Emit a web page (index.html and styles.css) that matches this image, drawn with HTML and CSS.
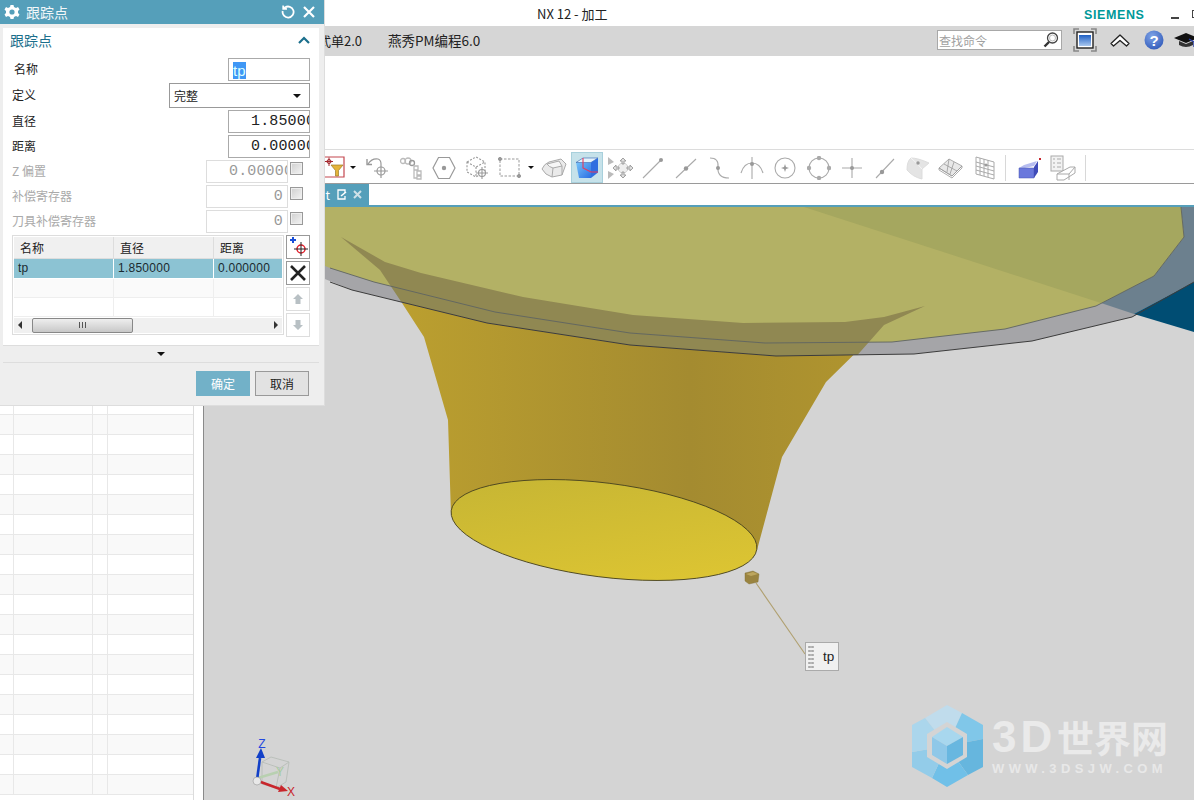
FILE: index.html
```html
<!DOCTYPE html>
<html lang="zh">
<head>
<meta charset="utf-8">
<title>NX 12 - 加工</title>
<link rel="stylesheet" href="styles.css">
</head>
<body>
<div class="app">
  <header class="titlebar">
    <div class="app-title">NX 12 - 加工</div>
    <div class="brand">SIEMENS</div>
    <div class="win-min"></div>
    <div class="win-max"></div>
  </header>

  <div class="menubar">
    <div class="menu-item first">式单2.0</div>
    <div class="menu-item second">燕秀PM编程6.0</div>
    <div class="menu-right">
      <div class="search">
        <span>查找命令</span>
        <svg width="18" height="18" viewBox="0 0 18 18"><circle cx="10.5" cy="7" r="5" fill="#fff" stroke="#444" stroke-width="1.3"/><circle cx="10.5" cy="7" r="3" fill="none" stroke="#bbb"/><path d="M7 11L2.5 15.5" stroke="#333" stroke-width="2.4"/></svg>
      </div>
      <svg class="mi" width="24" height="24" viewBox="0 0 24 24"><path d="M1 6V1h5M18 1h5v5M23 18v5h-5M6 23H1v-5" fill="none" stroke="#888" stroke-width="1.6"/><rect x="4" y="4" width="16" height="16" fill="#fff" stroke="#222" stroke-width="1.4"/><defs><linearGradient id="fs" x1="0" y1="0" x2="0" y2="1"><stop offset="0" stop-color="#1f5fc4"/><stop offset="1" stop-color="#a9c8ef"/></linearGradient></defs><rect x="6" y="7" width="12" height="11" fill="url(#fs)"/></svg>
      <svg class="mi chev" width="22" height="16" viewBox="0 0 22 16"><path d="M2 11.500L11 3L20 11.500L17.500 14L11 8.500L4.500 14Z" fill="#fff" stroke="#222" stroke-width="1.300" stroke-linejoin="round"/></svg>
      <svg class="mi help" width="20" height="20" viewBox="0 0 20 20"><defs><radialGradient id="hp" cx=".4" cy=".3" r=".8"><stop offset="0" stop-color="#7fa3e6"/><stop offset="1" stop-color="#2d57b8"/></radialGradient></defs><circle cx="10" cy="10" r="9.500" fill="url(#hp)"/><text x="10" y="15.500" class="help-q">?</text></svg>
      <svg class="mi cap" width="24" height="20" viewBox="0 0 24 20"><path d="M0 8L12 3L24 8L12 13Z" fill="#111"/><path d="M5 11V15Q12 19 19 15V11L12 14Z" fill="#333"/><path d="M15 9L20 12V17" fill="none" stroke="#2a3fa8" stroke-width="1.400"/></svg>
    </div>
  </div>

  <div class="ribbon"></div>

  <div class="toolbar">
    <svg class="filter" width="20" height="23" viewBox="0 0 20 23"><path d="M0 1H19V21H0" fill="#fff" stroke="#c4474f" stroke-width="1.200"/><path d="M4 1.500V10M0 5.500H8" stroke="#a3262c" stroke-width="1"/><circle cx="4" cy="5.500" r="2" fill="none" stroke="#a3262c"/><path d="M6 9H18L13.500 14.500V20H10.500V14.500Z" fill="#e4b43a" stroke="#9b7a26" stroke-width=".7"/></svg>
    <div class="dd"><i></i></div>

    <div class="tool"><svg width="24" height="24" viewBox="0 0 24 24" fill="none" stroke="#999" stroke-width="1.200"><path d="M2 8Q6 2 12 3Q15 4 15 8"/><path d="M1 3V8.500H6" stroke-width="1.400"/><circle cx="15" cy="15" r="4"/><path d="M15 8V22M8 15H22"/></svg></div>
    <div class="tool"><svg width="24" height="24" viewBox="0 0 24 24" fill="none" stroke="#bbb" stroke-width="1.300"><circle cx="4" cy="5" r="2.500"/><circle cx="9" cy="5" r="3"/><circle cx="13" cy="7" r="2.500" stroke="#999"/><path d="M15 10H19V14H15ZM18 15H22V19H18ZM18 20H22V23H18ZM15 14V22H18"/></svg></div>
    <div class="tool"><svg width="24" height="24" viewBox="0 0 24 24" fill="none" stroke="#999" stroke-width="1.200"><path d="M6.500 1.500H17.500L23 12L17.500 22.500H6.500L1 12Z"/><circle cx="12" cy="12" r="1.600" fill="#999"/></svg></div>
    <div class="tool"><svg width="24" height="24" viewBox="0 0 24 24" fill="none" stroke="#999" stroke-width="1.100"><path d="M2 6L11 1L20 6V16L11 21L2 16ZM2 6L11 11L20 6M11 11V21" stroke-dasharray="2 1.500"/><circle cx="17" cy="17" r="3.500" fill="#fff"/><path d="M17 11V23M11 17H23"/></svg></div>
    <div class="tool rect-tool"><svg width="24" height="24" viewBox="0 0 24 24" fill="none" stroke="#999"><rect x="3" y="3" width="19" height="17" stroke-dasharray="2.500 1.500"/><circle cx="3" cy="3" r="1.600" fill="#999"/><circle cx="22" cy="20" r="1.600" fill="#999"/></svg></div>
    <div class="dd narrow"><i></i></div>
    <div class="tool"><svg width="26" height="24" viewBox="0 0 26 24" stroke-linejoin="round"><path d="M1 13Q3 8 8 6L20 3L25 8L21 19L11 21Q4 19 1 13Z" fill="#eaeaea" stroke="#aaa"/><path d="M6 8L18 5L21 10L12 12Q8 11 6 8ZM12 12L11 21M21 10L21 19" fill="#f6f6f6" stroke="#aaa"/></svg></div>
    <div class="tool active"><svg width="24" height="24" viewBox="0 0 24 24"><defs><linearGradient id="bx" x1="0" y1="0" x2="1" y2="1"><stop offset="0" stop-color="#78c4fa"/><stop offset="1" stop-color="#2b6fe2"/></linearGradient></defs><path d="M1 6.500H16V22H4Z" fill="url(#bx)"/><path d="M1 6.500L8 2H23L16 6.500Z" fill="#e4f2fb" stroke="#2c5fae" stroke-width=".6"/><path d="M16 6.500V22L23 16.500V2Z" fill="#2f6ee0"/><path d="M8 2V12L16 16H23" fill="none" stroke="#e8385b" stroke-width="1.100"/></svg></div>
    <div class="tool"><svg width="26" height="24" viewBox="0 0 26 24" fill="#ddd" stroke="#999" stroke-width=".9"><path d="M1 1L7 6L1 9Z" fill="#bbb" stroke="none"/><path d="M1 15L7 18L1 23Z" fill="#bbb" stroke="none"/><circle cx="16" cy="12" r="5" fill="#eee" stroke="#ccc"/><path d="M16 2L19 5H17V8H15V5H13ZM16 22L19 19H17V16H15V19H13ZM6 12L9 9V11H12V13H9V15ZM26 12L23 9V11H20V13H23V15Z"/></svg></div>
    <div class="tool"><svg width="24" height="24" viewBox="0 0 24 24" fill="none" stroke="#aaa" stroke-width="1.100"><path d="M2 22L20 4"/><circle cx="20" cy="4" r="2" fill="#999" stroke="none"/></svg></div>
    <div class="tool"><svg width="24" height="24" viewBox="0 0 24 24" fill="none" stroke="#aaa" stroke-width="1.100"><path d="M2 22L22 3"/><circle cx="12" cy="12.500" r="2.200" fill="#999" stroke="none"/></svg></div>
    <div class="tool"><svg width="24" height="24" viewBox="0 0 24 24" fill="none" stroke="#aaa" stroke-width="1.100"><path d="M3 2Q12 2 11 11Q10 22 22 22"/><circle cx="11" cy="12" r="2" fill="#999" stroke="none"/></svg></div>
    <div class="tool"><svg width="24" height="24" viewBox="0 0 24 24" fill="none" stroke="#aaa" stroke-width="1.100"><path d="M1 17Q4 7 12 7Q20 7 23 17M12 1V23"/><circle cx="12" cy="8" r="2" fill="#999" stroke="none"/></svg></div>
    <div class="tool"><svg width="24" height="24" viewBox="0 0 24 24" fill="none" stroke="#aaa" stroke-width="1.100"><circle cx="12" cy="12" r="10"/><path d="M12 8L13 11L16 12L13 13L12 16L11 13L8 12L11 11Z" fill="#999" stroke="none"/></svg></div>
    <div class="tool"><svg width="24" height="24" viewBox="0 0 24 24" fill="none" stroke="#aaa" stroke-width="1.100"><circle cx="12" cy="12" r="10"/><g fill="#aaa" stroke="none"><circle cx="12" cy="2" r="2.200"/><circle cx="12" cy="22" r="2.200"/><circle cx="2" cy="12" r="2.200"/><circle cx="22" cy="12" r="2.200"/></g></svg></div>
    <div class="tool"><svg width="24" height="24" viewBox="0 0 24 24" fill="none" stroke="#aaa" stroke-width="1.100"><path d="M12 2V22M2 12H22"/><circle cx="12" cy="12" r="2" fill="#999" stroke="none"/></svg></div>
    <div class="tool"><svg width="24" height="24" viewBox="0 0 24 24" fill="none" stroke="#aaa" stroke-width="1.100"><path d="M3 22L21 3"/><circle cx="9" cy="16" r="2.200" fill="#999" stroke="none"/></svg></div>
    <div class="tool"><svg width="26" height="24" viewBox="0 0 26 24"><path d="M6 2Q13 2 24 7L17 13L17 23Q8 21 2 14Q2 5 6 2Z" fill="#e4e4e4" stroke="#ddd"/><path d="M17 13Q13 8 6 2" fill="none" stroke="#f5f5f5"/><circle cx="13" cy="7" r="1.700" fill="#999"/></svg></div>
    <div class="tool"><svg width="26" height="24" viewBox="0 0 26 24" stroke="#999" stroke-width=".8"><path d="M1 12L11 3L24 10L14 20Z" fill="#e8e8e8"/><path d="M1 12L14 20L24 10M1 12L1 14L14 22L24 12V10" fill="none"/><path d="M6 8L19 15M11 3L9 16M16 6L12 18" fill="none"/></svg></div>
    <div class="tool"><svg width="24" height="24" viewBox="0 0 24 24" fill="none" stroke="#aaa" stroke-width="1"><path d="M3 1L21 6L21 23L3 18ZM3 6L21 11M3 10L21 15M3 14L21 19M7 2V19M11 3V20M15 4V21"/><circle cx="13" cy="9" r="1.600" fill="#999" stroke="none"/></svg></div>
    <div class="sep"></div>
    <div class="tool"><svg width="26" height="24" viewBox="0 0 26 24"><path d="M2 12L7 9L20 5L17 10L3 13Z" fill="#b6bdf0"/><path d="M2 12H17V22H2Z" fill="#6a78dc" stroke="#4957b0" stroke-width=".5"/><path d="M17 11L21 5V16L17 22Z" fill="#3f4bb8"/><rect x="22" y="2" width="2" height="2" fill="#c6262e"/></svg></div>
    <div class="tool"><svg width="26" height="26" viewBox="0 0 26 26" fill="none" stroke="#aaa"><rect x="1" y="1" width="12" height="15" fill="#f2f2f2"/><path d="M3 4H5M7 4H11M3 8H5M7 8H11M3 12H5M7 12H11"/><path d="M7 25V19L20 12H25V18L14 25ZM7 19H19V25M19 19L25 12" fill="#fff"/></svg></div>
    <div class="sep last"></div>
  </div>

  <div class="tabs">
    <div class="tab">
      <span class="tab-name">t</span>
      <svg width="10" height="11" viewBox="0 0 10 11" fill="none" stroke="#fff" stroke-width="1.300"><path d="M8 4V1H1V10H8V7"/><path d="M4 7L9 3" stroke-width="1.600"/></svg>
      <svg class="tab-x" width="9" height="9" viewBox="0 0 9 9" stroke="#cfe1e8" stroke-width="2"><path d="M1 1L8 8M8 1L1 8"/></svg>
    </div>
  </div>

  <main class="work">
    <nav class="nav">
      <div class="nav-grid">
        <div class="nr"><b></b><b></b><b></b><b></b></div><div class="nr alt"><b></b><b></b><b></b><b></b></div>
        <div class="nr"><b></b><b></b><b></b><b></b></div><div class="nr alt"><b></b><b></b><b></b><b></b></div>
        <div class="nr"><b></b><b></b><b></b><b></b></div><div class="nr alt"><b></b><b></b><b></b><b></b></div>
        <div class="nr"><b></b><b></b><b></b><b></b></div><div class="nr alt"><b></b><b></b><b></b><b></b></div>
        <div class="nr"><b></b><b></b><b></b><b></b></div><div class="nr alt"><b></b><b></b><b></b><b></b></div>
        <div class="nr"><b></b><b></b><b></b><b></b></div><div class="nr alt"><b></b><b></b><b></b><b></b></div>
        <div class="nr"><b></b><b></b><b></b><b></b></div><div class="nr alt"><b></b><b></b><b></b><b></b></div>
        <div class="nr"><b></b><b></b><b></b><b></b></div><div class="nr alt"><b></b><b></b><b></b><b></b></div>
        <div class="nr"><b></b><b></b><b></b><b></b></div><div class="nr alt"><b></b><b></b><b></b><b></b></div>
        <div class="nr"><b></b><b></b><b></b><b></b></div><div class="nr alt"><b></b><b></b><b></b><b></b></div>
        <div class="nr"><b></b><b></b><b></b><b></b></div><div class="nr alt"><b></b><b></b><b></b><b></b></div>
        <div class="nr"><b></b><b></b><b></b><b></b></div><div class="nr alt"><b></b><b></b><b></b><b></b></div>
        <div class="nr"><b></b><b></b><b></b><b></b></div><div class="nr alt"><b></b><b></b><b></b><b></b></div>
        <div class="nr"><b></b><b></b><b></b><b></b></div><div class="nr alt"><b></b><b></b><b></b><b></b></div>
      </div>
    </nav>

    <section class="viewport">
      <svg class="scene" width="990" height="593" viewBox="204 207 990 593">
        <defs>
          <linearGradient id="amber" x1="0" y1="0" x2="1" y2="0">
            <stop offset="0" stop-color="#bb9f2f"/><stop offset=".55" stop-color="#a48b30"/><stop offset="1" stop-color="#b4982e"/>
          </linearGradient>
          <linearGradient id="cap" x1="0" y1="0" x2="1" y2="1">
            <stop offset="0" stop-color="#c4b434"/><stop offset="1" stop-color="#e0c732"/>
          </linearGradient>
          <clipPath id="upper">
            <path d="M204 207H1194V282L1132 317L1032 341L914 354L776 356L630 345L487 323L352 290L204 230Z"/>
          </clipPath>
        </defs>
        <rect x="204" y="207" width="990" height="593" fill="#d4d4d4"/>
        <path d="M402 303L424 337L448 420L451 515L757 550L782 457L826 382L884 325L925 306Z" fill="url(#amber)"/>
        <path d="M204 207H1194V282L1132 317L1032 341L914 354L776 356L630 345L487 323L352 290L204 230Z" fill="#a5a5a8"/>
        <path d="M1101 303L1134 314L1194 282V207H1181L1184 237L1154 276Z" fill="#6c808e"/>
        <path d="M1134 314L1194 282V332Z" fill="#004d73"/>
        <path d="M204 207H1181L1184 237L1154 276L1096 306L1005 329L892 342L765 343L630 333L495 312L374 282L330 268L204 215Z" fill="#b3b165"/>
        <path d="M804 207H1181L1184 237L1154 276L1101 303Z" fill="#a5a75f"/>
        <path d="M341 237L380 270L402 303L424 337L500 500L800 420L884 325L925 306L884 317L845 322L743 323L633 315L523 297L421 273L385 262Z" fill="#908852" clip-path="url(#upper)"/>
        <path d="M330 268L374 282L495 312L630 333L765 343L892 342L1005 329L1096 306L1154 276L1184 237L1181 207" fill="none" stroke="#5f6462" stroke-width=".9"/>
        <path d="M330 282L352 290L487 323L630 345L776 356L914 354L1032 341L1132 317L1194 282" fill="none" stroke="#3c3c3c" stroke-width="1"/>
        <ellipse cx="604" cy="530" rx="154" ry="47" transform="rotate(7.200 604 530)" fill="url(#cap)" stroke="#4a4520" stroke-width=".9"/>
        <path d="M745 573L753 571L759 574L758 582L749 584L745 581Z" fill="#9a8440" stroke="#7e6c30" stroke-width=".4"/>
        <path d="M746 574L753 572L758 574L751 576Z" fill="#bda65e"/>
        <path d="M756 583L805 654" stroke="#b0a070" stroke-width="1.100"/>

        <g class="triad">
          <path d="M262 762L271 757L289 762L286 782L276 788L262 784ZM262 762L280 768L289 762M280 768L276 788" fill="none" stroke="#b8bdb8" stroke-width=".9"/>
          <path d="M258 778L278 772" stroke="#b8d0b0" stroke-width="2.500"/>
          <path d="M257 780L260 758" stroke="#1240c8" stroke-width="2.600"/>
          <path d="M261 748L265 758H256Z" fill="#1240c8"/>
          <path d="M258 781L280 789" stroke="#c8262c" stroke-width="2.600"/>
          <path d="M288 791L278 792L281 785Z" fill="#c8262c"/>
          <circle cx="257" cy="781" r="4" fill="#e8e8e8" stroke="#999" stroke-width=".6"/>
          <text x="262" y="748" class="tz">Z</text>
          <text x="291" y="796" class="tx">X</text>
          <text x="280" y="776" class="ty">Y</text>
        </g>

        <g class="logo">
          <polygon points="947,746 925,718 947,705 962,713" fill="#c0dcec"/>
          <polygon points="947,746 962,713 983,725 983,739" fill="#80c7e9"/>
          <polygon points="947,746 983,739 983,767 968,775" fill="#66b6de"/>
          <polygon points="947,746 968,775 947,787 932,778" fill="#70c0e8"/>
          <polygon points="947,746 932,778 912,767 912,752" fill="#93cce9"/>
          <polygon points="947,746 912,752 912,725 925,718" fill="#abd6ec"/>
          <polygon points="947,722 967,734 967,757 947,769 927,757 927,734" fill="#d4d4d4"/>
          <polygon points="947,727 963,737 947,746 932,737" fill="#a8d7ee"/>
          <polygon points="932,737 947,746 947,764 932,755" fill="#8fc8e8"/>
          <polygon points="963,737 947,746 947,764 963,755" fill="#68b7e0"/>
        </g>
      </svg>

      <div class="note"><span class="grip"></span><span class="note-text">tp</span></div>
      <div class="wm-big"><span class="wm-3d">3D</span><span class="wm-cn">世界网</span></div>
      <div class="wm-small">WWW.3DSJW.COM</div>
    </section>
  </main>
</div>

<aside class="dialog">
  <div class="dlg-title">
    <svg width="16" height="16" viewBox="0 0 16 16"><path d="M6.500 1H9.500L10 3L12 4L14 3L15.500 5.500L14 7V9L15.500 10.500L14 13L12 12L10 13L9.500 15H6.500L6 13L4 12L2 13L.5 10.500L2 9V7L.5 5.500L2 3L4 4L6 3Z" fill="#fff"/><circle cx="8" cy="8" r="2.600" fill="#559fba"/></svg>
    <span class="dlg-name">跟踪点</span>
    <svg class="dlg-reset" width="14" height="14" viewBox="0 0 14 14" fill="none" stroke="#fff" stroke-width="1.800"><path d="M4 2.500A5.500 5.500 0 1 1 1.700 6"/><path d="M2 0.500V4H6" stroke-width="1.300" fill="#fff"/></svg>
    <svg class="dlg-close" width="12" height="12" viewBox="0 0 12 12" stroke="#fff" stroke-width="2.200"><path d="M1 1L11 11M11 1L1 11"/></svg>
  </div>

  <div class="panel">
    <div class="sec-head">
      <span>跟踪点</span>
      <svg width="12" height="8" viewBox="0 0 12 8" fill="none" stroke="#1b6f8c" stroke-width="2.200"><path d="M1 7L6 2L11 7"/></svg>
    </div>

    <div class="row"><label class="lbl name-lbl">名称</label><div class="field"><span class="sel">tp</span></div></div>
    <div class="row tall"><label class="lbl">定义</label><div class="select"><span>完整</span><i></i></div></div>
    <div class="row"><label class="lbl">直径</label><div class="field num">1.850000</div></div>
    <div class="row"><label class="lbl">距离</label><div class="field num">0.000000</div></div>
    <div class="row off"><label class="lbl">Z 偏置</label><div class="field num">0.000000</div><span class="check"></span></div>
    <div class="row off"><label class="lbl">补偿寄存器</label><div class="field num end">0</div><span class="check"></span></div>
    <div class="row off"><label class="lbl">刀具补偿寄存器</label><div class="field num end">0</div><span class="check"></span></div>

    <div class="list-wrap">
      <div class="list">
        <div class="lr head"><div>名称</div><div>直径</div><div>距离</div></div>
        <div class="lr on"><div>tp</div><div>1.850000</div><div>0.000000</div></div>
        <div class="lr alt"><div></div><div></div><div></div></div>
        <div class="lr"><div></div><div></div><div></div></div>
        <div class="hscroll">
          <i class="arr l"></i>
          <div class="thumb"><span></span></div>
          <i class="arr r"></i>
        </div>
      </div>
      <div class="side">
        <div class="sbtn"><svg width="20" height="20" viewBox="0 0 20 20"><path d="M5 0V6M2 3H8" stroke="#1a4fd8" stroke-width="2"/><circle cx="13" cy="12" r="4" fill="none" stroke="#e0202c" stroke-width="1.500"/><path d="M13 5V19M6 12H20" stroke="#222"/></svg></div>
        <div class="sbtn"><svg width="18" height="18" viewBox="0 0 18 18" stroke="#222" stroke-width="2.600"><path d="M2 2L16 16M16 2L2 16"/></svg></div>
        <div class="sbtn"><svg width="12" height="12" viewBox="0 0 12 12"><path d="M6 1L11 6H8.500V11H3.500V6H1Z" fill="#b8c0c4"/></svg></div>
        <div class="sbtn"><svg width="12" height="12" viewBox="0 0 12 12"><path d="M6 11L11 6H8.500V1H3.500V6H1Z" fill="#b8c0c4"/></svg></div>
      </div>
    </div>
  </div>

  <div class="more"><i></i></div>
  <div class="foot">
    <button class="btn primary">确定</button>
    <button class="btn">取消</button>
  </div>
</aside>
</body>
</html>
```
FILE: styles.css
```css
* { box-sizing: border-box; }
html, body { margin: 0; height: 100%; overflow: hidden; }
body {
  position: relative;
  background: #fff;
  color: #222;
  font-family: "Noto Sans CJK SC", "Noto Sans", sans-serif;
  font-size: 12px;
}
.app { display: flex; flex-direction: column; width: 1194px; height: 800px; }

/* title bar */
.titlebar { display: flex; align-items: center; height: 26px; background: #fff; flex: none; }
.app-title { margin-left: 537px; width: 73px; flex: none; font-size: 13px; color: #222; white-space: nowrap; }
.brand {
  margin: 3px 0 0 474px;
  font: bold 12.500px "Liberation Sans", sans-serif;
  letter-spacing: .6px;
  color: #009999;
  width: 62px;
  flex: none;
  white-space: nowrap;
}
.win-min { width: 8px; height: 2px; background: #444; margin: 10px 0 0 25px; flex: none; }
.win-max { width: 8px; height: 8px; border: 1px solid #444; margin: 2px 0 0 13px; flex: none; }

/* menu bar */
.menubar { display: flex; align-items: center; height: 30px; background: #d6d6d6; flex: none; font-size: 13px; padding-bottom: 2px; }
.menu-item { color: #222; white-space: nowrap; flex: none; }
.menu-item.first { margin-left: 318px; width: 70px; }
.menu-item.second { width: 110px; font-size: 13.500px; }
.menu-right { display: flex; align-items: center; margin-left: 439px; flex: none; }
.search {
  display: flex; align-items: center; justify-content: space-between;
  width: 125px; height: 20px; background: #fff; border: 1px solid #a8a8a8;
  padding: 0 1px; font-size: 12px; color: #a0a0a0; flex: none;
}
.mi { flex: none; display: block; }
.search + .mi { margin-left: 11px; }
.chev { margin-left: 12px; }
.help { margin-left: 13px; }
.cap { margin-left: 10px; }
.help-q { font: bold 15px "Liberation Sans", sans-serif; fill: #fff; text-anchor: middle; }

/* ribbon and toolbar */
.ribbon { height: 93px; background: #fff; flex: none; }
.toolbar {
  display: flex; align-items: center; height: 35px; flex: none;
  background: #fff; border-top: 1px solid #dcdcdc; border-bottom: 1px solid #9a9a9a;
  padding: 2px 0 0 325px;
}
.filter { flex: none; display: block; }
.dd { width: 16px; display: flex; justify-content: center; flex: none; }
.dd.narrow { width: 14px; }
.dd i, .select i, .more i {
  display: block; width: 0; height: 0;
  border-left: 4px solid transparent; border-right: 4px solid transparent; border-top: 4px solid #111;
}
.dd i { border-left-width: 3px; border-right-width: 3px; border-top-width: 3px; }
.tool { width: 33.200px; height: 31px; display: flex; align-items: center; justify-content: center; flex: none; }
.tool svg { display: block; flex: none; }
.rect-tool { width: 30px; }
.active { width: 32px; background: #c6e2ea; border: 1px solid #a8d0dc; }
.sep { width: 1px; height: 26px; background: #d8d8d8; margin: 0 7.400px 0 3.400px; flex: none; }
.sep.last { margin-left: 5.400px; }

/* tabs */
.tabs { height: 23px; background: #fff; border-bottom: 2px solid #559fba; flex: none; }
.tab {
  display: flex; align-items: center; justify-content: flex-end;
  width: 369px; height: 21px; background: #559fba; color: #fff;
  padding-right: 7px; font-size: 12px;
}
.tab-name { margin-right: 7px; }
.tab-x { margin-left: 6px; }

/* work area */
.work { display: flex; flex: 1; min-height: 0; }
.nav { width: 204px; background: #fff; border-right: 1px solid #8a8a8a; flex: none; overflow: hidden; }
.nav-grid { width: 194px; height: 100%; padding-top: 28px; border-right: 1px solid #dcdcdc; }
.nr {
  display: grid; grid-template-columns: 14px 79px 15px 85px;
  height: 20px; border-bottom: 1px solid #e8e8e8;
}
.nr.alt { background: #f9f9f9; }
.nr b { display: block; border-right: 1px solid #e8e8e8; }
.nr b:last-child { border-right: 0; }

.viewport { position: relative; flex: 1; background: #d4d4d4; overflow: hidden; }
.scene { display: block; }
.tz, .tx, .ty { font: 12px "Liberation Sans", sans-serif; text-anchor: middle; }
.tz { fill: #2348e0; }
.tx { fill: #c8262c; }
.ty { fill: #a8cca0; }

.note {
  position: absolute; left: 601px; top: 435px;
  display: flex; align-items: center;
  width: 34px; height: 29px; background: #f0f0f0; border: 1px solid #aaa;
}
.grip {
  width: 6px; height: 24px; margin-left: 2px;
  background: radial-gradient(circle, #aaa 1.100px, transparent 1.200px) 0 0 / 3px 4px;
}
.note-text { margin-left: 9px; font: 13.500px "Liberation Sans", sans-serif; color: #222; }

.wm-big { position: absolute; left: 788px; top: 511px; height: 38px; color: #eaeaea; font-weight: 700; white-space: nowrap; display: flex; align-items: center; }
.wm-3d { font: bold 44px/38px "Liberation Sans", sans-serif; letter-spacing: 4px; width: 65px; }
.wm-cn { font-size: 37px; line-height: 38px; }
.wm-small {
  position: absolute; left: 788px; top: 554px;
  font: bold 13px/15px "Liberation Sans", sans-serif; letter-spacing: 4.400px; color: #e8e8e8; white-space: nowrap;
}

/* dialog */
.dialog {
  position: absolute; left: 0; top: 0; width: 325px; height: 406px;
  background: #eee; border-right: 1px solid #ddd; border-bottom: 1px solid #ddd;
  display: flex; flex-direction: column;
}
.dlg-title { display: flex; align-items: center; height: 24px; background: #559fba; padding: 0 9px 0 4px; flex: none; color: #fff; }
.dlg-name { font-size: 14px; margin-left: 6px; flex: 1; color: #f2f7f9; }
.dlg-reset { margin-right: 8px; }
.panel { margin: 4px 5px 0 3px; height: 318px; background: #fff; border-bottom: 1px solid #ddd; flex: none; padding: 0 9px; }
.sec-head { display: flex; align-items: center; justify-content: space-between; height: 30px; font-size: 14px; color: #1b6f8c; padding-bottom: 7px; margin-left: -2px; }
.row { display: flex; align-items: center; justify-content: flex-end; height: 23px; margin-bottom: 2px; }
.row.tall { height: 25px; }
.lbl { margin: -2px auto 0 0; font-size: 12px; color: #222; }
.name-lbl { margin-left: 2px; }
.field {
  width: 82px; height: 23px; background: #fff; border: 1px solid #aaa;
  padding: 2px 0 0 4px; overflow: hidden; white-space: nowrap; flex: none; font-size: 13px;
}
.sel { display: inline-block; background: #3f97f5; color: #dff; font: 15px/17px "Liberation Sans", sans-serif; }
.num { font: 15px/18px "Liberation Mono", monospace; letter-spacing: .15px; padding-left: 22px; }
.num.end { text-align: right; padding-right: 4px; }
.select { display: flex; align-items: center; justify-content: space-between; width: 141px; height: 25px; border: 1px solid #999; background: #fff; padding: 0 8px 0 4px; font-size: 12px; }
.off .lbl { color: #aaa; }
.off .field { border-color: #ddd; color: #999; }
.check { width: 13px; height: 13px; border: 1px solid #999; background: linear-gradient(135deg, #cfcfcf, #f4f4f4); margin: -6px 7px 0 2px; flex: none; box-shadow: inset 0 0 0 1px #eee; }

.list-wrap { display: flex; justify-content: space-between; }
.list { width: 272px; height: 100px; border: 1px solid #ddd; padding: 1px; background: #fff; display: flex; flex-direction: column; }
.lr { display: grid; grid-template-columns: 100px 100px 68px; height: 20px; border-bottom: 1px solid #eee; }
.lr > div { border-right: 1px solid #eee; padding-left: 4px; line-height: 19px; white-space: nowrap; }
.lr > div:last-child { border-right: 0; }
.head { height: 22px; background: #f0f0f0; border-bottom: 1px solid #ddd; }
.head > div { padding-left: 6px; border-right-color: #ddd; line-height: 21px; }
.on { background: #8cc3d3; border-bottom: 1px solid #fff; font: 12px "Liberation Sans", sans-serif; letter-spacing: .25px; }
.on > div { border-right-color: #fff; color: #1a2a30; }
.lr.alt { background: #fafafa; }
.hscroll { position: relative; display: flex; align-items: center; justify-content: space-between; margin-top: 1px; height: 16px; background: #f0f0f0; padding: 0 4px; }
.arr { width: 0; height: 0; border-top: 4px solid transparent; border-bottom: 4px solid transparent; }
.arr.l { border-right: 4px solid #333; }
.arr.r { border-left: 4px solid #333; }
.thumb {
  position: absolute; left: 18px; top: 0; width: 101px; height: 15px;
  border: 1px solid #888; border-radius: 2px;
  background: linear-gradient(#eee, #c8c8c8);
  display: flex; align-items: center; justify-content: center;
}
.thumb span { width: 7px; height: 6px; background: repeating-linear-gradient(90deg, #555 0 1px, transparent 1px 3px); }
.side { display: flex; flex-direction: column; gap: 2px; }
.sbtn { display: flex; align-items: center; justify-content: center; width: 24px; height: 24px; background: #fff; border: 1px solid #999; }
.sbtn:nth-child(n+3) { border-color: #ddd; }
.more { display: flex; align-items: center; justify-content: center; height: 17px; border-bottom: 1px solid #ddd; margin: 0 5px 0 3px; flex: none; }
.foot { display: flex; justify-content: flex-end; gap: 5px; padding: 8px 15px 0 0; }
.btn {
  width: 54px; height: 25px; border: 1px solid #999; background: #e2e2e2; color: #222;
  font: 12px "Noto Sans CJK SC", sans-serif; padding: 0;
}
.primary { background: #72b1c8; border-color: #72b1c8; color: #fff; }
```
